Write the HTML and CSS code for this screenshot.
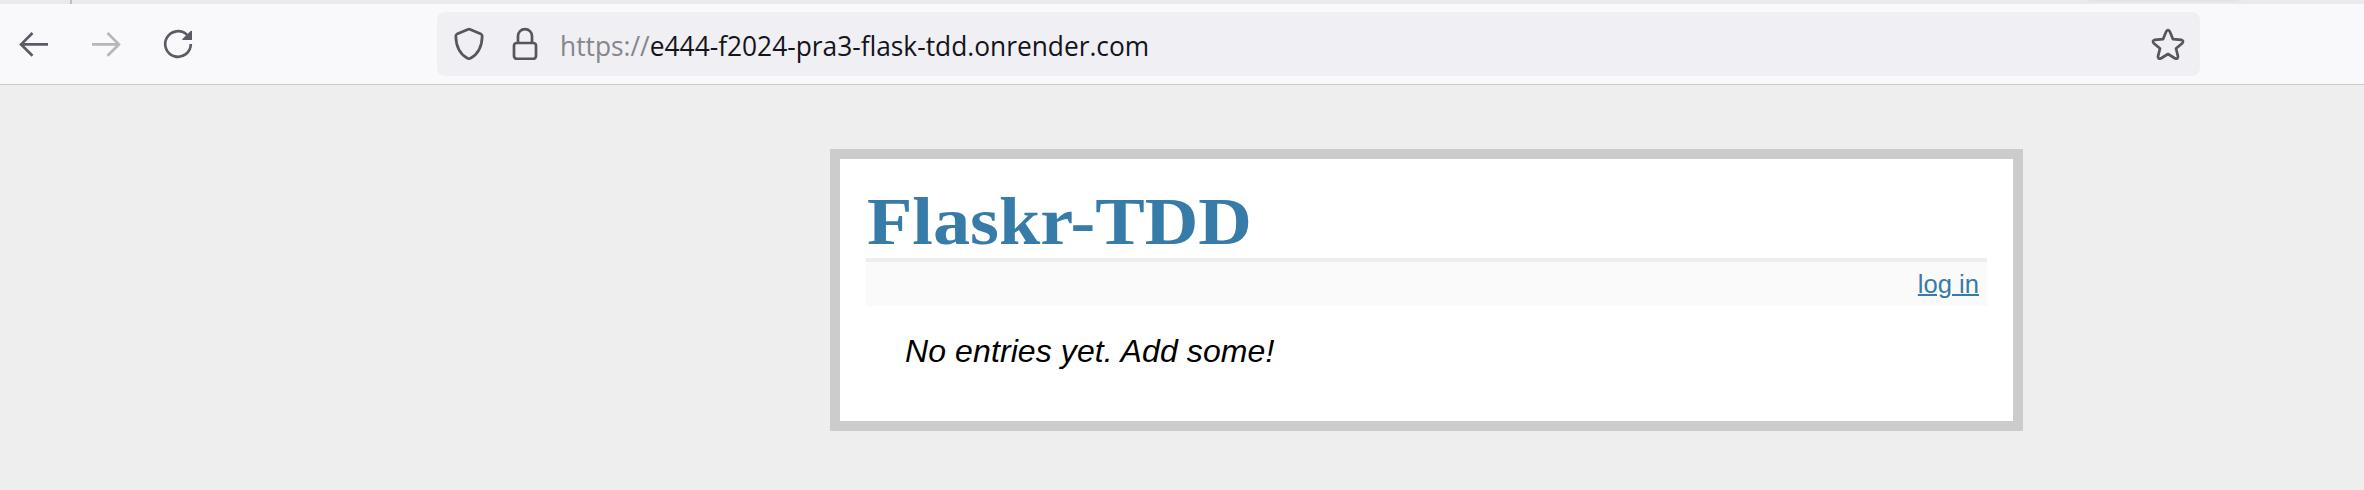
FILE: index.html
```html
<!DOCTYPE html>
<html lang="en">
<head>
<meta charset="utf-8">
<title>Flaskr-TDD</title>
<link rel="stylesheet" href="styles.css">
</head>
<body>
<header class="browser">
  <div class="tabstrip"><span class="tab-divider"></span><span class="tab-shadow"></span></div>
  <div class="toolbar">
    <nav class="nav-buttons">
      <svg class="icon" viewBox="0 0 32 32"><path d="M30 16.4H3.5M14.5 5L3.1 16.4L14.5 27.8"/></svg>
      <svg class="icon disabled" viewBox="0 0 32 32"><path d="M2 16.4H28.5M17.5 5L28.9 16.4L17.5 27.8"/></svg>
      <svg class="icon reload" viewBox="0 0 32 32"><path d="M28.8 16A12.8 12.8 0 1 1 25 6.9"/><path class="fill" d="M30 3V12H20.5Q20 11.3 20.6 10.8L28.6 3Q29.4 2.4 30 3Z"/></svg>
    </nav>
    <div class="urlbar">
      <svg class="icon shield" viewBox="0 0 32 34"><path d="M16 3.2Q16.7 3.2 17.3 3.5L28 8.1Q29.2 8.7 29.2 10C29 21 25.5 28 17.5 32.2Q16 33.1 14.5 32.2C6.5 28 3 21 2.8 10Q2.8 8.7 4 8.1L14.7 3.5Q15.3 3.2 16 3.2Z"/></svg>
      <svg class="icon lock" viewBox="0 0 32 34"><path d="M9 16.8V10.1A7 7 0 0 1 23 10.1V16.8"/><rect x="5" y="17" width="22" height="15.9" rx="2.8"/></svg>
      <div class="url"><span class="url-text"><span class="scheme">https://</span>e444-f2024-pra3-flask-tdd.onrender.com</span></div>
      <svg class="icon star" viewBox="0 0 34 34"><path d="M15.2 4.5Q17 1.8 18.8 4.5L22 12.2L30.3 12.8Q33.2 13.7 31.3 16.2L25 21.5L27 29.4Q27 32.3 24.2 31.5L17 27L9.8 31.5Q7 32.3 7 29.4L9 21.5L2.7 16.2Q.8 13.7 3.7 12.8L12 12.2Z"/></svg>
    </div>
  </div>
</header>
<main class="page">
  <h1 class="title"><span class="title-text">Flaskr-TDD</span></h1>
  <div class="metanav"><a class="login" href="#">log in</a></div>
  <ul class="entries"><li><em>No entries yet. Add some!</em></li></ul>
</main>
</body>
</html>
```
FILE: styles.css
```css
* { box-sizing: border-box; }
body {
  margin: 0;
  height: 490px;
  overflow: hidden;
  background: #eee;
  font-family: "Liberation Sans", Arial, sans-serif;
}
.browser { height: 85px; background: #f9f9fb; border-bottom: 1px solid #cacacf; }
.tabstrip {
  display: flex;
  justify-content: space-between;
  height: 4px;
  padding: 0 119px 0 70px;
  background: #eaeaee;
}
.tab-divider { width: 2px; background: #bebec4; }
.tab-shadow { width: 162px; height: 2px; background: linear-gradient(90deg, #eaeaee, #e2e2e6 10%, #e2e2e6 90%, #eaeaee); }
.toolbar { display: flex; align-items: center; height: 80px; padding-left: 18px; }
.nav-buttons { display: flex; gap: 40px; width: 419px; }
.icon { display: block; flex: none; width: 32px; height: 32px; fill: none; stroke: #5b5b66; stroke-width: 2.7; }
.disabled { opacity: .42; }
.icon .fill { fill: #5b5b66; stroke: none; }
.urlbar {
  display: flex;
  align-items: center;
  width: 1763px;
  height: 64px;
  padding: 0 15px 0 16px;
  border-radius: 8px;
  background: #f0eff4;
}
.shield, .lock, .star { height: 34px; stroke: #56565b; stroke-linejoin: round; }
.shield { margin-top: -2px; }
.lock { margin: -2px 0 0 24px; }
.star { width: 34px; }
.url { flex: 1; margin-left: 19px; padding-top: 2px; }
.url-text {
  display: inline-block;
  font: 28px/40px "Open Sans", "Noto Sans", sans-serif;
  color: #15141a;
  white-space: nowrap;
  transform: scaleX(.94);
  transform-origin: left;
}
.scheme { color: #86868a; }
.page {
  width: 1193px;
  height: 282px;
  margin: 64px 0 0 830px;
  padding: 26px;
  border: 10px solid #ccc;
  background: #fff;
}
.title { height: 77px; margin: 0; border-bottom: 4px solid #eee; }
.title-text {
  display: inline-block;
  margin-left: 1px;
  font: bold 67px/73px "Liberation Serif", Georgia, serif;
  color: #377ba8;
  transform: scaleX(1.108);
  transform-origin: left;
}
.metanav { height: 44px; padding: 6px 8px; background: #fafafa; text-align: right; font-size: 25.6px; line-height: 32px; }
.login { color: #377ba8; text-decoration-thickness: 2px; }
.entries { margin: 25px 0 0; padding: 0 0 0 39px; list-style: none; font-size: 32px; line-height: 40px; letter-spacing: .1px; }
```
